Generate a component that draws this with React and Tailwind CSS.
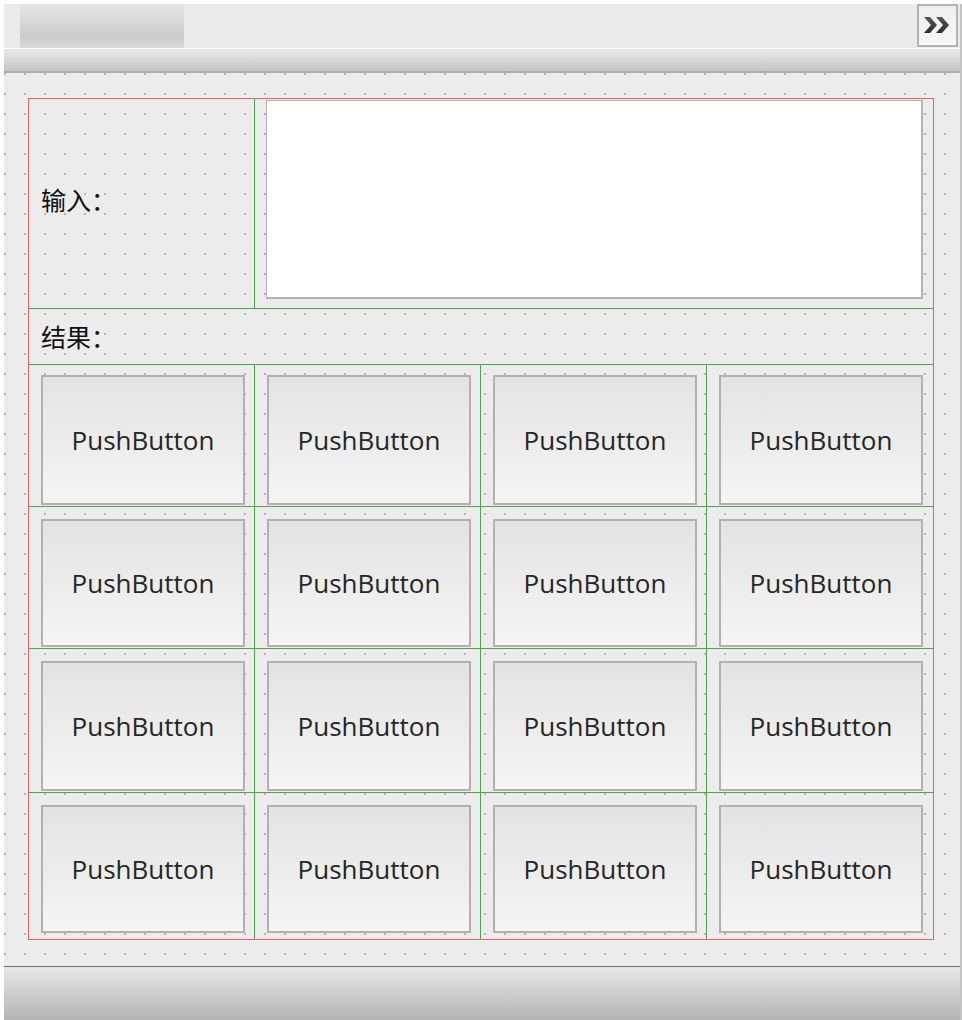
import React from "react";

// grid rows: [row height incl. top line, button top margin, button height]
const rows = [
  [142, 10, 130],
  [142, 12, 128],
  [144, 12, 130],
  [147, 12, 128],
];
const cols = [225, 226, 226, 227];

const PushButton = ({ mt, h }) => (
  <div
    className="ml-[12px] w-[204px] flex items-center justify-center border-2 border-[#b1b1b1] bg-linear-to-b from-[#e3e3e3] to-[#f5f5f5] text-[26px] text-[#262626] font-['Open_Sans','Liberation_Sans',sans-serif]"
    style={{ marginTop: mt, height: h }}
  >
    PushButton
  </div>
);

const Chevrons = () => (
  <svg width="28" height="18" viewBox="0 0 28 18">
    <defs>
      <linearGradient id="chev" x1="0" y1="0" x2="0" y2="1">
        <stop offset="0" stopColor="#555" />
        <stop offset="1" stopColor="#2c2c2c" />
      </linearGradient>
    </defs>
    <polygon points="1,1 7,1 14,9 7,17 1,17 8,9" fill="url(#chev)" />
    <polygon points="13,1 19,1 26,9 19,17 13,17 20,9" fill="url(#chev)" />
  </svg>
);

export default function App() {
  return (
    <div className="w-[962px] h-[1020px] bg-white pl-[4px] pt-[4px] flex">
      <div className="flex-1 flex flex-col border-r-2 border-[#c3c3c3]">
        {/* title strip */}
        <div className="h-[44px] bg-[#ebebeb] flex items-stretch">
          <div className="ml-[16px] w-[164px] bg-linear-to-b from-[#e7e7e7] via-[#cbcbcb] via-75% to-[#dadada]" />
          <div className="flex-1" />
          <div className="mr-[2px] w-[41px] h-[43px] border-2 border-[#b3b3b3] bg-linear-to-b from-[#efefef] to-[#f7f7f7] flex items-center justify-center pb-[2px] pr-[2px]">
            <Chevrons />
          </div>
        </div>
        <div className="h-px bg-white" />
        <div className="h-[22px] bg-linear-to-b from-[#e9e9e9] to-[#c7c7c7]" />
        <div className="h-[2px] bg-[#adadad]" />

        {/* form canvas */}
        <div className="h-[893px] pl-[24px] pt-[25px] bg-[#b5b5b5] bg-[image:linear-gradient(90deg,transparent_2px,#ececec_2px),linear-gradient(180deg,transparent_2px,#ececec_2px)] bg-size-[20px_20px]">
          <div className="w-[906px] h-[842px] border border-[#ee5f5f] flex flex-col">
            <div className="h-[209px] flex">
              <div className="w-[225px] flex items-center pl-[12px] pb-[8px] text-[25px] text-[#111] font-['Noto_Sans_CJK_SC',sans-serif]">
                输入：
              </div>
              <div className="flex-1 border-l border-[#4fa44f] pl-[11px] pt-px">
                <div className="w-[657px] h-[199px] bg-white border border-[#b4b4b4] border-r-2 border-b-2" />
              </div>
            </div>
            <div className="h-[56px] border-t border-[#4fa44f] flex items-center pl-[12px] text-[25px] text-[#111] font-['Noto_Sans_CJK_SC',sans-serif]">
              结果：
            </div>
            {rows.map(([rh, mt, bh], r) => (
              <div key={r} className="flex border-t border-[#4fa44f]" style={{ height: rh }}>
                {cols.map((cw, c) => (
                  <div
                    key={c}
                    className={c === 0 ? "" : "border-l border-[#4fa44f]"}
                    style={{ width: cw }}
                  >
                    <PushButton mt={mt} h={bh} />
                  </div>
                ))}
              </div>
            ))}
          </div>
        </div>

        <div className="h-px bg-[#6f6f6f]" />
        <div className="h-[53px] bg-linear-to-b from-[#e8e8e8] to-[#b4b4b4]" />
      </div>
    </div>
  );
}
